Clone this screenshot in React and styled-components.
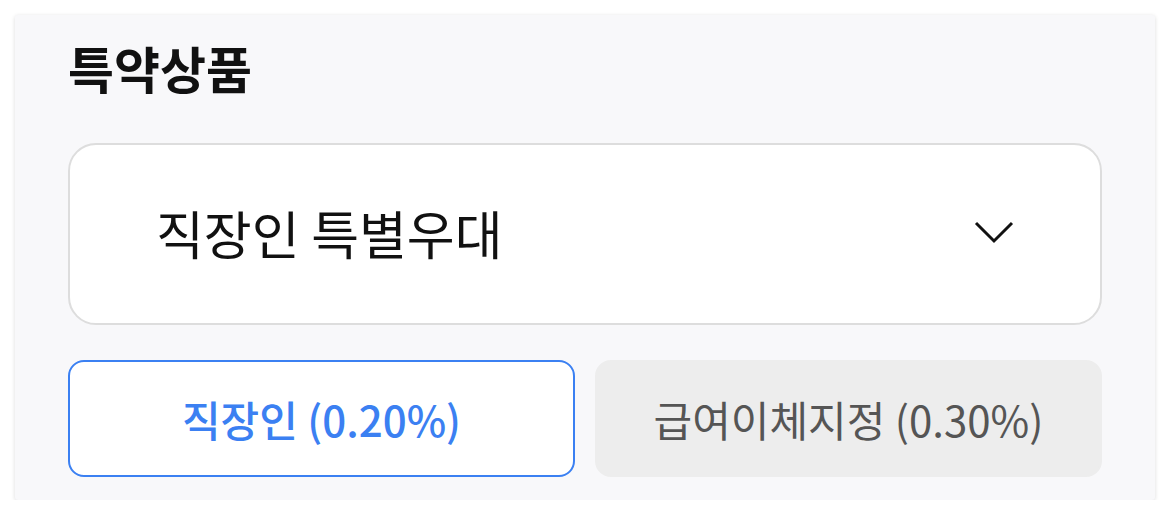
import React from "react";
import styled, { createGlobalStyle } from "styled-components";

const GlobalStyle = createGlobalStyle`
  body {
    margin: 0;
    background: #ffffff;
    font-family: "Noto Sans CJK KR", "Noto Sans", sans-serif;
  }
`;

const Panel = styled.section`
  margin: 15px 15px 0;
  width: 1140px;
  box-sizing: border-box;
  padding: 24px 53px 23px;
  background-color: #f8f8fa;
  border-radius: 3px;
  box-shadow: 0 1px 4px rgba(0, 0, 0, 0.14);
  display: flex;
  flex-direction: column;
`;

const Title = styled.h2`
  margin: 0;
  font-size: 50px;
  font-weight: 700;
  color: #111;
  line-height: 56px;
`;

const Select = styled.div`
  margin-top: 48px;
  height: 182px;
  flex-shrink: 0;
  box-sizing: border-box;
  border: 2px solid #dddddd;
  border-radius: 28px;
  background: #ffffff;
  display: flex;
  align-items: center;
  justify-content: space-between;
  padding: 0 86px 4px 86px;
`;

const SelectText = styled.span`
  font-size: 52px;
  color: #111;
`;

const Options = styled.div`
  margin-top: 35px;
  display: grid;
  grid-template-columns: 1fr 1fr;
  gap: 20px;
`;

const Option = styled.button`
  height: 117px;
  box-sizing: border-box;
  border-radius: 16px;
  font-family: inherit;
  font-size: 42px;
  padding: 0;
  border: 2px solid ${({ $active }) => ($active ? "#3b80f2" : "#ededed")};
  background: ${({ $active }) => ($active ? "#ffffff" : "#ededed")};
  color: ${({ $active }) => ($active ? "#3b80f2" : "#555555")};
  font-weight: ${({ $active }) => ($active ? 500 : 400)};
`;

const Chevron = () => (
  <svg width="40" height="24" viewBox="0 0 40 24" fill="none">
    <path d="M2 3 L20 21 L38 3" stroke="#111" strokeWidth="3" />
  </svg>
);

export default function App() {
  return (
    <>
      <GlobalStyle />
      <Panel>
        <Title>특약상품</Title>
        <Select>
          <SelectText>직장인 특별우대</SelectText>
          <Chevron />
        </Select>
        <Options>
          <Option $active>직장인 (0.20%)</Option>
          <Option>급여이체지정 (0.30%)</Option>
        </Options>
      </Panel>
    </>
  );
}
